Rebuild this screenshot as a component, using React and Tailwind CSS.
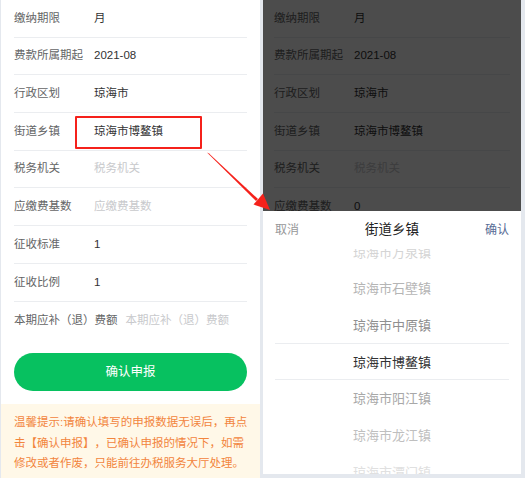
import React from "react";

const rows = [
  { label: "缴纳期限", value: "月" },
  { label: "费款所属期起", value: "2021-08" },
  { label: "行政区划", value: "琼海市" },
  { label: "街道乡镇", value: "琼海市博鳌镇" },
  { label: "税务机关", placeholder: "税务机关" },
  { label: "应缴费基数", placeholder: "应缴费基数" },
  { label: "征收标准", value: "1" },
  { label: "征收比例", value: "1" },
  { label: "本期应补（退）费额", placeholder: "本期应补（退）费额", last: true },
];

const overlayRows = [
  { label: "缴纳期限", value: "月" },
  { label: "费款所属期起", value: "2021-08" },
  { label: "行政区划", value: "琼海市" },
  { label: "街道乡镇", value: "琼海市博鳌镇" },
  { label: "税务机关", placeholder: "税务机关" },
  { label: "应缴费基数", value: "0" },
  { label: "征收标准", value: "1" },
];

const options = [
  { name: "琼海市万泉镇", color: "text-[#d4d4d4]" },
  { name: "琼海市石壁镇", color: "text-[#b5b5b5]" },
  { name: "琼海市中原镇", color: "text-[#8f8f8f]" },
  { name: "琼海市博鳌镇", color: "text-[#323233]" },
  { name: "琼海市阳江镇", color: "text-[#a8a8a8]" },
  { name: "琼海市龙江镇", color: "text-[#bfbfbf]" },
  { name: "琼海市潭门镇", color: "text-[#e0e0e0]" },
];

function FormRow({ row }) {
  return (
    <div
      className={`flex h-[37.7px] items-center text-[11.5px] ${
        row.last ? "" : "border-b border-[#ebedf0]"
      }`}
    >
      <span className="min-w-[80px] pr-[8px] text-[#646566]">{row.label}</span>
      {row.value ? (
        <span className="text-[#323233]">{row.value}</span>
      ) : (
        <span className="text-[#c8c9cc]">{row.placeholder}</span>
      )}
    </div>
  );
}

export default function App() {
  return (
    <div
      className="relative flex h-[478px] w-[525px] overflow-hidden bg-[#e4e8ee] [text-spacing-trim:space-all]"
      style={{ fontFamily: '"Liberation Sans", "Noto Sans CJK SC", sans-serif' }}
    >
      {/* left: form */}
      <div className="ml-[1px] flex w-[259px] flex-col bg-white">
        <div className="px-[13px]">
          {rows.map((row) => (
            <FormRow key={row.label} row={row} />
          ))}
        </div>
        <div className="px-[13px] pb-[13px] pt-[14px]">
          <button className="h-[38px] w-full rounded-full bg-[#07c160] text-[12.5px] text-white">
            确认申报
          </button>
        </div>
        <div className="flex-1 bg-[#fff8e8] pl-[13px] pr-[8px] pt-[8px] text-[11.5px] leading-[20.5px] text-[#f2853d]">
          温馨提示:请确认填写的申报数据无误后，再点击【确认申报】，已确认申报的情况下，如需修改或者作废，只能前往办税服务大厅处理。
        </div>
      </div>

      {/* right: picker open */}
      <div className="relative ml-[3px] h-[474px] w-[258px] overflow-hidden bg-white">
        <div className="px-[11px]">
          {overlayRows.map((row) => (
            <FormRow key={row.label} row={row} />
          ))}
        </div>
        <div className="absolute inset-0 bg-black/70" />
        <div className="absolute inset-x-0 bottom-0 top-[211px] flex flex-col bg-white">
          <div className="flex h-[38px] items-center justify-between px-[12px]">
            <span className="text-[12px] text-[#969799]">取消</span>
            <span className="text-[13.5px] text-[#222]">街道乡镇</span>
            <span className="text-[12px] text-[#576b95]">确认</span>
          </div>
          <div className="relative flex-1 overflow-hidden">
            <div className="-mt-[15px]">
              {options.map((o) => (
                <div
                  key={o.name}
                  className={`flex h-[36.7px] items-center justify-center text-[13px] ${o.color}`}
                >
                  {o.name}
                </div>
              ))}
            </div>
            <div className="absolute inset-x-[12px] top-[94px] h-[37px] border-y border-[#ebedf0]" />
          </div>
        </div>
      </div>

      {/* annotation */}
      <div className="absolute left-[75px] top-[116px] h-[33px] w-[127px] rounded-[1px] border-2 border-[#f5211b]" />
      <svg className="absolute left-0 top-0" width="525" height="478">
        <polygon points="207,152.5 209,153.5 258,199 256,201" fill="#f5211b" />
        <polygon points="270,210 253.5,204.5 263,193.5" fill="#f5211b" />
      </svg>
    </div>
  );
}
